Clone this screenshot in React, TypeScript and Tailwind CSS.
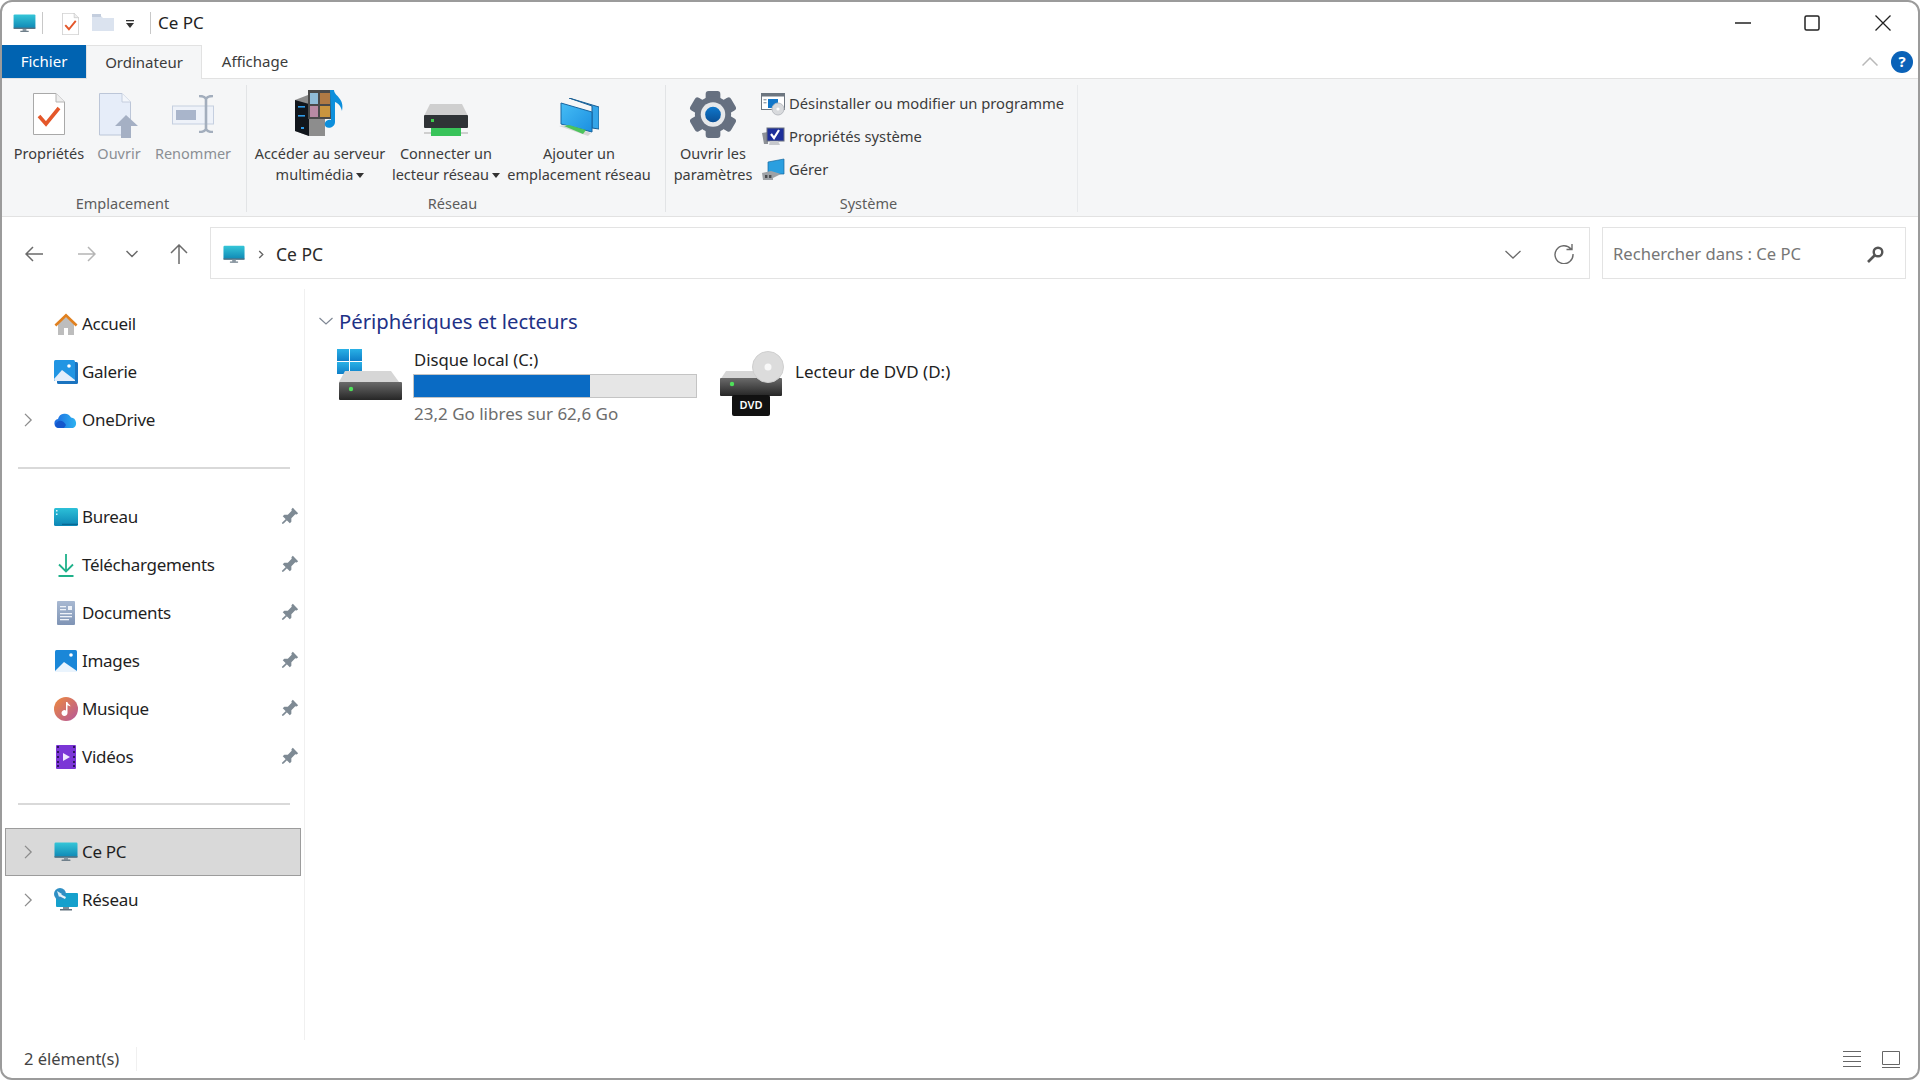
import React from "react";

const Pc = ({ className = "" }: { className?: string }) => (
  <svg viewBox="0 0 24 20" className={className}>
    <defs>
      <linearGradient id="pcg" x1="0" y1="0" x2="0" y2="1">
        <stop offset="0" stopColor="#35c6d8" />
        <stop offset="1" stopColor="#0e86b4" />
      </linearGradient>
    </defs>
    <rect x="0.5" y="0.5" width="23" height="15" rx="1.2" fill="url(#pcg)" />
    <rect x="0.5" y="14.3" width="23" height="1.4" fill="#5c6f7d" />
    <rect x="10" y="15.7" width="4" height="2.2" fill="#8a97a1" />
    <rect x="7.5" y="17.6" width="9" height="1.3" rx=".4" fill="#6f7f8a" />
  </svg>
);

const CheckDoc = ({ className = "" }: { className?: string }) => (
  <svg viewBox="0 0 32 42" className={className}>
    <path d="M.5.5H23L31.5 9v32.5H.5z" fill="#fff" stroke="#a9a9a9" />
    <path d="M23 .5V9h8.5" fill="#eee" stroke="#b5b5b5" />
    <path d="M6 23l7 8L26 15" fill="none" stroke="#e4572a" strokeWidth="3.6" />
  </svg>
);

const OpenDoc = ({ className = "" }: { className?: string }) => (
  <svg viewBox="0 0 40 45" className={className}>
    <path d="M.5.5H23L31.5 9v33H.5z" fill="#e6edf9" stroke="#bcc6d8" />
    <path d="M23 .5V9h8.5" fill="#f3f6fb" stroke="#c5cede" />
    <path d="M27 22L16 33h6v12h10V33h7z" fill="#a5b0c4" />
  </svg>
);

const RenameIcon = ({ className = "" }: { className?: string }) => (
  <svg viewBox="0 0 42 38" className={className}>
    <rect x=".5" y="11" width="41" height="18" fill="#eef2f9" stroke="#c5cfe0" />
    <rect x="4" y="15" width="20" height="10" fill="#a9b5cb" />
    <path d="M27 1c4 0 6 1 7 3 1-2 3-3 7-3M27 37c4 0 6-1 7-3 1 2 3 3 7 3M34 4v30" fill="none" stroke="#a3aebd" strokeWidth="2.6" />
  </svg>
);

const MediaIcon = ({ className = "" }: { className?: string }) => (
  <svg viewBox="0 0 50 46" className={className}>
    <path d="M0 10l13-5 17 3v38H14L0 41z" fill="#8d8d8d" />
    <path d="M0 10l14 4v32L0 41z" fill="#11161c" />
    <rect x="3" y="16" width="7" height="1.6" fill="#2f9ae6" />
    <rect x="3" y="25" width="7" height="1.6" fill="#2f9ae6" />
    <rect x="6" y="37" width="3" height="2" fill="#2f9ae6" />
    <rect x="13" y="0" width="24" height="29" fill="#4a4a4a" />
    <rect x="15" y="3" width="8" height="11" fill="#8fbcd8" />
    <rect x="25" y="3" width="10" height="11" fill="#b07a44" />
    <rect x="15" y="16" width="8" height="11" fill="#b88aa4" />
    <rect x="25" y="16" width="10" height="11" fill="#c9953f" />
    <path d="M35 0h4c0 6 11 8 8 21-1-5-4-8-7-9v20c0 5-6 7-9 5-3-3 0-8 5-7z" fill="#0d8fdc" />
  </svg>
);

const NetDrive = ({ className = "" }: { className?: string }) => (
  <svg viewBox="0 0 44 32" className={className}>
    <path d="M6 0h32l6 12H0z" fill="#cfcfcf" />
    <rect x="0" y="11" width="44" height="13" rx="1" fill="#2f3336" />
    <rect x="7" y="15" width="3" height="3" fill="#3ecb4b" />
    <rect x="7" y="24" width="30" height="8" fill="#38c35a" />
    <rect x="0" y="28" width="7" height="2" fill="#cfcfcf" />
    <rect x="37" y="28" width="7" height="2" fill="#cfcfcf" />
  </svg>
);

const AddLoc = ({ className = "" }: { className?: string }) => (
  <svg viewBox="0 0 40 38" className={className}>
    <defs>
      <linearGradient id="alg" x1="0" y1="0" x2="1" y2="1">
        <stop offset="0" stopColor="#46bdf5" />
        <stop offset="1" stopColor="#1b8fe0" />
      </linearGradient>
    </defs>
    <path d="M10 0l30 9v22l-7-1V8z" fill="#35a5e8" stroke="#1b5f94" strokeWidth="1" />
    <path d="M2 5l31 9v20L2 26z" fill="url(#alg)" stroke="#17649f" strokeWidth="1" />
    <path d="M0 28l6-1 26 8-3 3z" fill="#d7d7d7" />
    <path d="M5 28l5-1 17 5-3 4z" fill="#4cc35c" />
  </svg>
);

const Gear = ({ className = "" }: { className?: string }) => (
  <svg viewBox="0 0 48 48" className={className}>
    <defs>
      <linearGradient id="gg" x1="0" y1="0" x2="0" y2="1">
        <stop offset="0" stopColor="#0f78cc" />
        <stop offset="1" stopColor="#0a4f95" />
      </linearGradient>
    </defs>
    {[0, 60, 120, 180, 240, 300].map((a) => (
      <rect key={a} x="16.5" y="0" width="15" height="12" rx="3" fill="#667080" transform={`rotate(${a} 24 24)`} />
    ))}
    <circle cx="24" cy="24" r="18.5" fill="#667080" />
    <circle cx="24" cy="24" r="12.5" fill="#e6e8ea" />
    <circle cx="24" cy="24" r="8" fill="url(#gg)" />
  </svg>
);

const SmallProg = ({ className = "" }: { className?: string }) => (
  <svg viewBox="0 0 24 24" className={className}>
    <rect x=".5" y="1.5" width="23" height="16" fill="#fff" stroke="#6d7680" />
    <rect x=".5" y="1.5" width="23" height="3" fill="#6d7680" />
    <rect x="7" y="7" width="10" height="9" fill="#1277c9" />
    <rect x="2.5" y="7" width="3" height="1.4" fill="#9aa3ad" />
    <rect x="2.5" y="10" width="3" height="1.4" fill="#9aa3ad" />
    <circle cx="17" cy="17" r="6" fill="#d8dadd" stroke="#b8bcc1" />
    <circle cx="17" cy="17" r="1.6" fill="#fff" />
  </svg>
);

const SmallSys = ({ className = "" }: { className?: string }) => (
  <svg viewBox="0 0 24 24" className={className}>
    <path d="M1 8l6-1v12H3z" fill="#8d9197" />
    <rect x="6" y="3" width="17" height="13" fill="#1d2f9a" stroke="#6a7080" />
    <path d="M10 9l3 4 5-8" fill="none" stroke="#fff" strokeWidth="2.2" />
    <path d="M9 16h8l2 4H8z" fill="#c6c8cc" />
  </svg>
);

const SmallManage = ({ className = "" }: { className?: string }) => (
  <svg viewBox="0 0 24 24" className={className}>
    <path d="M7 4l16-3v15L7 16z" fill="#2a9fe0" stroke="#19689f" strokeWidth=".7" />
    <path d="M1 15l9-2 10 3-8 4v2H2z" fill="#9ea2a6" />
    <rect x="4" y="17" width="2.4" height="3" fill="#4a4d50" />
    <rect x="8" y="17" width="2.4" height="3" fill="#4a4d50" />
  </svg>
);

const Pin = () => (
  <svg viewBox="0 0 24 24" className="h-[22px] w-[22px]">
    <g transform="rotate(45 12 12)" fill="#7e8a94">
      <path d="M7.5 1h9v2.4l-1.5 1V11l3 3v2.6H6V14l3-3V4.400L7.500 3.400z" />
      <path d="M11 16h2v6l-1 2-1-2z" />
    </g>
  </svg>
);

const Home = () => (
  <svg viewBox="0 0 24 24" className="h-[24px] w-[24px]">
    <path d="M4 12v11h6v-7h4v7h6V12l-8-7z" fill="#bdbdbd" />
    <path d="M.5 12.500L12 1.500l11.500 11-1.800 1.900L12 5.300 2.300 14.400z" fill="#e0801f" />
  </svg>
);
const Gallery = () => (
  <svg viewBox="0 0 24 24" className="h-[24px] w-[24px]">
    <rect x="3" y="2" width="21" height="22" rx="1.500" fill="#1a73bf" />
    <rect x="0" y="0" width="21" height="21" rx="1.500" fill="#2195e3" />
    <circle cx="15" cy="6" r="1.800" fill="#fff" />
    <path d="M0 19l8-9 13 10v1H1z" fill="#e3eefb" />
  </svg>
);
const Cloud = () => (
  <svg viewBox="0 0 24 16" className="h-[16px] w-[24px]">
    <defs>
      <linearGradient id="cg" x1="0" y1="0" x2="1" y2="0">
        <stop offset="0" stopColor="#1c6ae0" />
        <stop offset="1" stopColor="#2db2f0" />
      </linearGradient>
    </defs>
    <path d="M5 16a4.500 4.500 0 0 1-1-8.900 7 7 0 0 1 13-1.500A5.500 5.500 0 0 1 19 16z" fill="url(#cg)" />
    <path d="M1 13c3-6 8-5 11 0l-2 3H5c-2 0-3-1-4-3z" fill="#1457cc" />
  </svg>
);
const Desk = () => (
  <svg viewBox="0 0 24 18" className="h-[18px] w-[24px]">
    <defs>
      <linearGradient id="dg" x1="0" y1="0" x2="0" y2="1">
        <stop offset="0" stopColor="#2cc0d8" />
        <stop offset="1" stopColor="#0c85b5" />
      </linearGradient>
    </defs>
    <rect width="24" height="18" rx="1.500" fill="url(#dg)" />
    <rect x="2" y="2" width="1.500" height="1.500" fill="#dff5fa" />
    <rect x="2" y="5.500" width="1.500" height="1.500" fill="#dff5fa" />
    <rect x="8" y="15.800" width="16" height="1" fill="#08618a" />
  </svg>
);
const Down = () => (
  <svg viewBox="0 0 24 24" className="h-[24px] w-[24px]" fill="none" stroke="#1fb18a" strokeWidth="1.800">
    <path d="M12 1v17M5 11.500l7 7 7-7M4.500 23h15" />
  </svg>
);
const Docs = () => (
  <svg viewBox="0 0 18 24" className="h-[24px] w-[18px]">
    <defs>
      <linearGradient id="dcg" x1="0" y1="0" x2="0" y2="1">
        <stop offset="0" stopColor="#a8b9d2" />
        <stop offset="1" stopColor="#7f94b5" />
      </linearGradient>
    </defs>
    <rect width="18" height="24" rx="1" fill="url(#dcg)" />
    <g fill="#eef2f8">
      <rect x="3" y="5" width="6" height="1.300" />
      <rect x="3" y="8" width="6" height="1.300" />
      <rect x="11" y="5" width="4" height="4" />
      <rect x="3" y="12" width="12" height="1.300" />
      <rect x="3" y="15" width="12" height="1.300" />
      <rect x="3" y="18" width="9" height="1.300" />
    </g>
  </svg>
);
const Images = () => (
  <svg viewBox="0 0 22 22" className="h-[22px] w-[22px]">
    <rect width="22" height="22" rx="1.500" fill="#1a87d8" />
    <circle cx="16" cy="5" r="1.800" fill="#fff" />
    <path d="M0 21l9-9 13 9v1H0z" fill="#eaf4fd" />
  </svg>
);
const Music = () => (
  <svg viewBox="0 0 24 24" className="h-[24px] w-[24px]">
    <defs>
      <linearGradient id="mg" x1="0" y1="0" x2="1" y2="1">
        <stop offset="0" stopColor="#ee8a3c" />
        <stop offset="1" stopColor="#b4579c" />
      </linearGradient>
    </defs>
    <circle cx="12" cy="12" r="12" fill="url(#mg)" />
    <path d="M12 5h1.500c0 2 3 2.500 3 4.500-1-.8-2-1-3-1.200V16a3 3 0 1 1-1.500-2.600z" fill="#fff" />
  </svg>
);
const Video = () => (
  <svg viewBox="0 0 20 24" className="h-[24px] w-[20px]">
    <rect width="20" height="24" rx="1" fill="#7b36d6" />
    {[2, 7, 12, 17, 21].map((y) => (
      <React.Fragment key={y}>
        <rect x="1" y={y - 1} width="2" height="2" fill="#2e1460" />
        <rect x="17" y={y - 1} width="2" height="2" fill="#2e1460" />
      </React.Fragment>
    ))}
    <path d="M7 8l7 4-7 4z" fill="#f0e6ff" />
  </svg>
);
const Net = () => (
  <svg viewBox="0 0 24 24" className="h-[24px] w-[24px]">
    <rect x="2" y="5" width="22" height="14" rx="1" fill="#15a0cc" />
    <rect x="9" y="19" width="6" height="2" fill="#7f8c96" />
    <rect x="6" y="21" width="12" height="1.500" fill="#60707c" />
    <circle cx="6" cy="6" r="6" fill="#2f8fc4" />
    <path d="M3 3l5 3-3 3z" fill="#dceff8" />
    <path d="M6 6l6 3-1 2-6-3z" fill="#e6f2f8" />
  </svg>
);

const Chev = () => (
  <svg viewBox="0 0 10 16" className="h-[14px] w-[9px]" fill="none" stroke="#8c8c8c" strokeWidth="1.500">
    <path d="M1 1l7 7-7 7" />
  </svg>
);

const Caret = () => (
  <svg viewBox="0 0 8 5" className="ml-[3px] inline-block h-[5px] w-[8px] align-[2px]">
    <path d="M0 0h8L4 5z" fill="#333" />
  </svg>
);

const RibbonBtn = ({
  w,
  top,
  icon,
  lines,
  disabled = false,
}: {
  w: string;
  top: string;
  icon: React.ReactNode;
  lines: React.ReactNode[];
  disabled?: boolean;
}) => (
  <div className={`flex flex-col items-center ${w}`}>
    <div className={`flex h-[58px] justify-center ${top}`}>{icon}</div>
    <div className={`whitespace-nowrap text-center text-[14.5px] leading-[21px] ${disabled ? "text-[#8b8f94]" : "text-[#3c3c3c]"}`}>
      {lines.map((l, i) => (
        <div key={i}>{l}</div>
      ))}
    </div>
  </div>
);

const NavRow = ({
  icon,
  label,
  chevron = false,
  pin = false,
  selected = false,
}: {
  icon: React.ReactNode;
  label: string;
  chevron?: boolean;
  pin?: boolean;
  selected?: boolean;
}) => (
  <div
    className={`ml-[3px] mr-[3px] flex h-[48px] items-center border ${
      selected ? "border-[#9c9c9c] bg-[#d9d9d9]" : "border-transparent"
    }`}
  >
    <div className="flex w-[47px] shrink-0 justify-end pr-[20px]">{chevron && <Chev />}</div>
    <div className="flex w-[26px] shrink-0 justify-center">{icon}</div>
    <span className="ml-[3px] flex-1 text-[17px] tracking-[-0.3px] text-[#1f1f1f]">{label}</span>
    {pin && (
      <div className="mr-[1px] flex w-[20px] justify-center">
        <Pin />
      </div>
    )}
  </div>
);

export default function App() {
  return (
    <div className="h-screen w-screen overflow-hidden bg-white font-['Noto_Sans',sans-serif]">
      <div className="flex h-full w-full flex-col overflow-hidden rounded-[12px] border-2 border-[#9b9b9b] bg-white">
        {/* Title bar */}
        <div className="flex h-[43px] shrink-0 items-center pb-[2px]">
          <Pc className="ml-[11px] mt-[2px] h-[19px] w-[23px]" />
          <div className="ml-[6px] h-[22px] w-px bg-[#c8c8c8]" />
          <CheckDoc className="ml-[19px] mt-[2px] h-[22px] w-[17px]" />
          <svg viewBox="0 0 22 17" className="ml-[13px] h-[17px] w-[22px]">
            <path d="M0 2h9l2 2h11v13H0z" fill="#dbe3ef" />
            <rect x="0" y="0" width="9" height="3" fill="#c4cede" />
          </svg>
          <svg viewBox="0 0 8 9" className="ml-[12px] mt-[3px] h-[9px] w-[8px]">
            <rect x="0" y="0" width="8" height="1.300" fill="#333" />
            <path d="M0 3h8L4 8z" fill="#333" />
          </svg>
          <div className="ml-[16px] h-[22px] w-px bg-[#c8c8c8]" />
          <span className="ml-[7px] text-[17px] text-[#222]">Ce PC</span>
          <div className="ml-auto flex items-center">
            <svg viewBox="0 0 16 16" className="h-[16px] w-[16px]" stroke="#222" strokeWidth="1.300" fill="none">
              <path d="M0 8h16" />
            </svg>
            <svg viewBox="0 0 16 16" className="ml-[53px] h-[16px] w-[16px]" stroke="#222" strokeWidth="1.500" fill="none">
              <rect x="1" y="1" width="14" height="14" rx="1.500" />
            </svg>
            <svg viewBox="0 0 16 16" className="ml-[55px] mr-[27px] h-[16px] w-[16px]" stroke="#222" strokeWidth="1.300" fill="none">
              <path d="M.5.500l15 15M15.500.500l-15 15" />
            </svg>
          </div>
        </div>

        {/* Tabs */}
        <div className="flex h-[34px] shrink-0 items-stretch border-b border-[#e2e2e2] text-[15px]">
          <div className="flex w-[84px] items-center justify-center bg-[#0063b1] text-white">Fichier</div>
          <div className="-mb-px flex w-[116px] items-center justify-center border-x border-t border-[#e2e2e2] bg-[#f5f6f7] text-[#3c3c3c]">
            Ordinateur
          </div>
          <div className="ml-[7px] flex w-[92px] items-center justify-center text-[#3c3c3c]">Affichage</div>
          <div className="ml-auto flex items-center">
            <svg viewBox="0 0 16 9" className="h-[9px] w-[16px]" fill="none" stroke="#b9b9b9" strokeWidth="1.500">
              <path d="M.5 8.500L8 1l7.500 7.500" />
            </svg>
            <div className="ml-[13px] mr-[5px] flex h-[22px] w-[22px] items-center justify-center rounded-full bg-[#0a62b8] text-[15px] font-bold text-white">
              ?
            </div>
          </div>
        </div>

        {/* Ribbon */}
        <div className="flex h-[138px] shrink-0 items-start border-b border-[#e2e2e2] bg-[#f5f6f7] pt-[6px]">
          <div className="flex h-[127px] w-[245px] flex-col border-r border-[#e2e4e6]">
            <div className="flex h-[107px] pl-[11px]">
              <RibbonBtn w="w-[72px]" top="pt-[8px]" icon={<CheckDoc className="h-[42px] w-[32px]" />} lines={["Propriétés"]} />
              <RibbonBtn w="w-[68px]" top="pt-[8px]" icon={<OpenDoc className="h-[45px] w-[40px]" />} lines={["Ouvrir"]} disabled />
              <RibbonBtn w="w-[80px]" top="pt-[10px]" icon={<RenameIcon className="h-[38px] w-[42px]" />} lines={["Renommer"]} disabled />
            </div>
            <div className="pr-[3px] pt-[2px] text-center text-[14.5px] leading-[18px] text-[#5c5c5c]">Emplacement</div>
          </div>
          <div className="flex h-[127px] w-[419px] flex-col border-r border-[#e2e4e6]">
            <div className="flex h-[107px] pl-[6px]">
              <RibbonBtn
                w="w-[134px]"
                top="pt-[5px]"
                icon={<MediaIcon className="h-[46px] w-[50px]" />}
                lines={["Accéder au serveur", <>multimédia<Caret /></>]}
              />
              <RibbonBtn
                w="w-[118px]"
                top="pt-[19px]"
                icon={<NetDrive className="h-[32px] w-[44px]" />}
                lines={["Connecter un", <>lecteur réseau<Caret /></>]}
              />
              <RibbonBtn
                w="w-[148px]"
                top="pt-[13px]"
                icon={<AddLoc className="h-[38px] w-[40px]" />}
                lines={["Ajouter un", "emplacement réseau"]}
              />
            </div>
            <div className="pr-[7px] pt-[2px] text-center text-[14.5px] leading-[18px] text-[#5c5c5c]">Réseau</div>
          </div>
          <div className="flex h-[127px] w-[412px] flex-col border-r border-[#e8eaec]">
            <div className="flex h-[107px] pl-[5px]">
              <RibbonBtn w="w-[84px]" top="pt-[6px]" icon={<Gear className="h-[47px] w-[48px]" />} lines={["Ouvrir les", "paramètres"]} />
              <div className="ml-[6px] flex flex-col pt-[2px] text-[14.75px] text-[#3c3c3c]">
                {[
                  { i: <SmallProg className="h-[24px] w-[24px]" />, t: "Désinstaller ou modifier un programme" },
                  { i: <SmallSys className="h-[24px] w-[24px]" />, t: "Propriétés système" },
                  { i: <SmallManage className="h-[24px] w-[24px]" />, t: "Gérer" },
                ].map((r) => (
                  <div key={r.t} className="flex h-[33px] items-center gap-[4px] whitespace-nowrap">
                    {r.i}
                    <span>{r.t}</span>
                  </div>
                ))}
              </div>
            </div>
            <div className="pr-[6px] pt-[2px] text-center text-[14.5px] leading-[18px] text-[#5c5c5c]">Système</div>
          </div>
        </div>

        {/* Address row */}
        <div className="flex h-[72px] shrink-0 items-start pt-[10px]">
          <div className="ml-[23px] flex h-[52px] items-center pt-[2px]">
            <svg viewBox="0 0 18 16" className="h-[16px] w-[18px]" fill="none" stroke="#6b6b6b" strokeWidth="1.500">
              <path d="M18 8H1M8 1L1 8l7 7" />
            </svg>
            <svg viewBox="0 0 18 16" className="ml-[35px] h-[16px] w-[18px]" fill="none" stroke="#b5b5b5" strokeWidth="1.500">
              <path d="M0 8h17M10 1l7 7-7 7" />
            </svg>
            <svg viewBox="0 0 12 8" className="ml-[30px] h-[8px] w-[12px]" fill="none" stroke="#6b6b6b" strokeWidth="1.500">
              <path d="M.5 1L6 6.500 11.500 1" />
            </svg>
            <svg viewBox="0 0 18 20" className="ml-[32px] h-[20px] w-[18px]" fill="none" stroke="#6b6b6b" strokeWidth="1.500">
              <path d="M9 20V1M1 9l8-8 8 8" />
            </svg>
          </div>
          <div className="ml-[22px] flex h-[52px] w-[1380px] items-center border border-[#e3e3e3] pl-[12px] pr-[15px] pt-[2px]">
            <Pc className="h-[19px] w-[22px]" />
            <svg viewBox="0 0 6 10" className="ml-[13px] h-[9px] w-[6px]" fill="none" stroke="#666" strokeWidth="1.500">
              <path d="M1 1l4 4-4 4" />
            </svg>
            <span className="ml-[12px] text-[17.5px] text-[#2a2a2a]">Ce PC</span>
            <svg viewBox="0 0 16 9" className="ml-auto h-[9px] w-[16px]" fill="none" stroke="#6b6b6b" strokeWidth="1.300">
              <path d="M.5 1L8 8l7.500-7" />
            </svg>
            <svg viewBox="0 0 20 20" className="ml-[33px] h-[20px] w-[20px]" fill="none" stroke="#6b6b6b" strokeWidth="1.400">
              <path d="M17 5a9 9 0 1 0 2 5M18 0v5.500h-5.500" />
            </svg>
          </div>
          <div className="ml-[12px] flex h-[52px] w-[304px] items-center border border-[#e3e3e3] pl-[10px] pr-[21px] pt-[2px]">
            <span className="text-[16.6px] text-[#767676]">Rechercher dans : Ce PC</span>
            <svg viewBox="0 0 17 17" className="ml-auto h-[17px] w-[17px]">
              <circle cx="11" cy="6" r="4.300" fill="none" stroke="#555" strokeWidth="2.400" />
              <path d="M8 9l-7 7" stroke="#555" strokeWidth="2.600" />
            </svg>
          </div>
        </div>

        {/* Main */}
        <div className="flex min-h-0 flex-1">
          <div className="w-[303px] shrink-0 border-r border-[#f0f0f0] pt-[11px]">
            <NavRow icon={<Home />} label="Accueil" />
            <NavRow icon={<Gallery />} label="Galerie" />
            <NavRow icon={<Cloud />} label="OneDrive" chevron />
            <div className="ml-[16px] mr-[14px] mb-[24px] mt-[23px] h-[2px] bg-[#d9d9d9]" />
            <NavRow icon={<Desk />} label="Bureau" pin />
            <NavRow icon={<Down />} label="Téléchargements" pin />
            <NavRow icon={<Docs />} label="Documents" pin />
            <NavRow icon={<Images />} label="Images" pin />
            <NavRow icon={<Music />} label="Musique" pin />
            <NavRow icon={<Video />} label="Vidéos" pin />
            <div className="ml-[16px] mr-[14px] mb-[23px] mt-[22px] h-[2px] bg-[#d9d9d9]" />
            <NavRow icon={<Pc className="h-[20px] w-[24px]" />} label="Ce PC" chevron selected />
            <NavRow icon={<Net />} label="Réseau" chevron />
          </div>
          <div className="min-w-0 flex-1 pl-[14px] pt-[18px]">
            <div className="flex h-[28px] items-center">
              <svg viewBox="0 0 14 8" className="h-[8px] w-[14px]" fill="none" stroke="#7f8794" strokeWidth="1.200">
                <path d="M.5 1L7 7l6.500-6" />
              </svg>
              <span className="ml-[6px] text-[20.3px] text-[#1e3287]">Périphériques et lecteurs</span>
            </div>
            <div className="mt-[14px] flex">
              <div className="flex w-[383px]">
                <svg viewBox="0 0 66 52" className="ml-[18px] h-[52px] w-[66px] shrink-0">
                  <defs>
                    <linearGradient id="hd" x1="0" y1="0" x2="0" y2="1">
                      <stop offset="0" stopColor="#6a6a6a" />
                      <stop offset="1" stopColor="#262626" />
                    </linearGradient>
                    <linearGradient id="win" x1="0" y1="0" x2="0" y2="1">
                      <stop offset="0" stopColor="#29b1e6" />
                      <stop offset="1" stopColor="#0f7fc8" />
                    </linearGradient>
                  </defs>
                  <g fill="url(#win)">
                    <rect x="0" y="0" width="12" height="12" />
                    <rect x="13" y="0" width="12" height="12" />
                    <rect x="0" y="13" width="12" height="12" />
                    <rect x="13" y="13" width="12" height="12" />
                  </g>
                  <path d="M8 22h46l8 11H2z" fill="#d6d6d6" />
                  <rect x="2" y="33" width="63" height="18" rx="1" fill="url(#hd)" />
                  <circle cx="14" cy="40" r="2.200" fill="#4fe05a" />
                </svg>
                <div className="ml-[10px] w-[284px] flex-none">
                  <div className="pl-[1px] pt-[1px] text-[16.7px] leading-[20px] text-[#222]">Disque local (C:)</div>
                  <div className="mt-[4px] h-[24px] border border-[#c4c4c4] bg-[#e6e6e6]">
                    <div className="h-full bg-[#0a6bc4]" style={{ width: "62.500%" }} />
                  </div>
                  <div className="mt-[5px] pl-[1px] text-[17px] leading-[22px] text-[#6d6d6d]">23,2 Go libres sur 62,6 Go</div>
                </div>
              </div>
              <div className="ml-[16px] flex">
                <div className="relative h-[68px] w-[66px] shrink-0">
                  <svg viewBox="0 0 66 52" className="absolute left-0 top-[2px] h-[52px] w-[66px]">
                    <defs>
                      <linearGradient id="hd2" x1="0" y1="0" x2="0" y2="1">
                        <stop offset="0" stopColor="#6a6a6a" />
                        <stop offset="1" stopColor="#262626" />
                      </linearGradient>
                    </defs>
                    <path d="M8 20h46l8 9H2z" fill="#d6d6d6" />
                    <rect x="2" y="27" width="62" height="18" rx="1" fill="url(#hd2)" />
                    <circle cx="14" cy="33" r="2.200" fill="#4fe05a" />
                    <circle cx="50" cy="16" r="15.500" fill="#dcdcdc" stroke="#cfcfcf" />
                    <circle cx="50" cy="16" r="3.500" fill="#f8f8f8" />
                  </svg>
                  <div className="absolute left-[14px] top-[46px] flex h-[21px] w-[38px] items-center justify-center rounded-[2px] bg-[#111] text-[11px] font-semibold text-white">
                    DVD
                  </div>
                </div>
                <span className="ml-[11px] mt-[13px] text-[17px] leading-[20px] text-[#222]">Lecteur de DVD (D:)</span>
              </div>
            </div>
          </div>
        </div>

        {/* Status */}
        <div className="flex h-[38px] shrink-0 items-center">
          <span className="ml-[22px] text-[16.5px] text-[#444]">2 élément(s)</span>
          <div className="ml-[17px] h-[24px] w-px bg-[#f0f0f0]" />
          <div className="ml-auto mr-[18px] flex items-center">
            <svg viewBox="0 0 18 16" className="h-[16px] w-[18px]" fill="none" stroke="#666" strokeWidth="1">
              <path d="M0 .5h18M0 5.500h18M0 10.500h18M0 15.500h18" />
            </svg>
            <svg viewBox="0 0 18 17" className="ml-[21px] h-[17px] w-[18px]" fill="none" stroke="#666" strokeWidth="1">
              <path d="M.5.500h17v13H.5zM0 16.500h18" />
            </svg>
          </div>
        </div>
      </div>
    </div>
  );
}
